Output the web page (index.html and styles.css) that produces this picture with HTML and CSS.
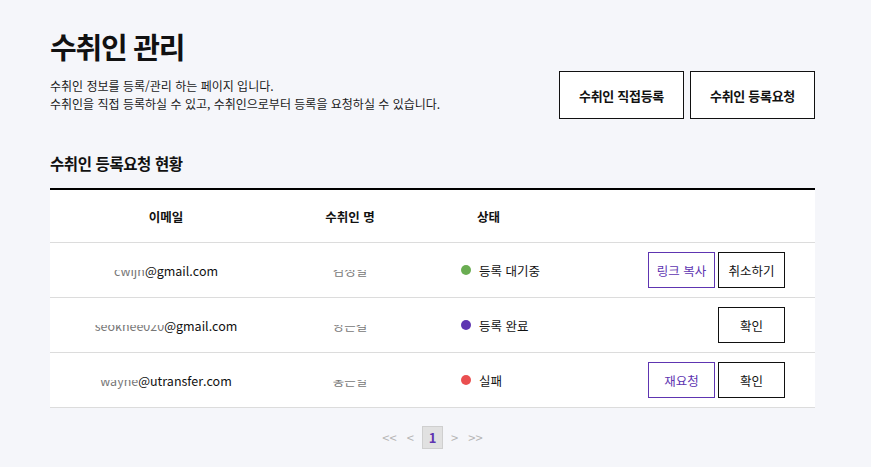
FILE: index.html
```html
<!DOCTYPE html>
<html lang="ko">
  <head>
    <meta charset="UTF-8" />
    <meta name="viewport" content="width=device-width, initial-scale=1.0" />
    <title>수취인 관리</title>
    <link rel="stylesheet" href="styles.css">
  </head>
  <body>
    <div class="page">
      <div class="top">
        <div class="intro">
          <h1>수취인 관리</h1>
          <p>수취인 정보를 등록/관리 하는 페이지 입니다.<br />수취인을 직접 등록하실 수 있고, 수취인으로부터 등록을 요청하실 수 있습니다.</p>
        </div>
        <div class="top-actions">
          <button class="btn-big">수취인 직접등록</button>
          <button class="btn-big">수취인 등록요청</button>
        </div>
      </div>

      <h2>수취인 등록요청 현황</h2>

      <div class="table">
        <div class="row head">
          <div class="c-email">이메일</div>
          <div class="c-name">수취인 명</div>
          <div class="c-status">상태</div>
          <div class="c-act"></div>
        </div>
        <div class="row">
          <div class="c-email"><span class="masked">cwijh</span>@gmail.com</div>
          <div class="c-name"><span class="masked">김성일</span></div>
          <div class="c-status"><i class="dot wait"></i>등록 대기중</div>
          <div class="c-act">
            <button class="btn-sm purple">링크 복사</button>
            <button class="btn-sm">취소하기</button>
          </div>
        </div>
        <div class="row">
          <div class="c-email"><span class="masked">seokhee020</span>@gmail.com</div>
          <div class="c-name"><span class="masked">양은길</span></div>
          <div class="c-status"><i class="dot done"></i>등록 완료</div>
          <div class="c-act">
            <button class="btn-sm">확인</button>
          </div>
        </div>
        <div class="row">
          <div class="c-email"><span class="masked">wayne</span>@utransfer.com</div>
          <div class="c-name"><span class="masked">홍은일</span></div>
          <div class="c-status"><i class="dot fail"></i>실패</div>
          <div class="c-act">
            <button class="btn-sm purple">재요청</button>
            <button class="btn-sm">확인</button>
          </div>
        </div>
      </div>

      <div class="pager">
        <span>&lt;&lt;</span>
        <span>&lt;</span>
        <span class="current">1</span>
        <span>&gt;</span>
        <span>&gt;&gt;</span>
      </div>
    </div>
  </body>
</html>
```

FILE: styles.css
```css
body {
  margin: 0;
  background: #f5f6fa;
  color: #111;
  font-family: "Noto Sans CJK KR", "Noto Sans", sans-serif;
}
.page {
  width: 765px;
  margin-left: 50px;
  padding-top: 26px;
}
.top {
  display: flex;
  justify-content: space-between;
  align-items: flex-start;
}
h1 {
  margin: 0;
  font-size: 29px;
  font-weight: 700;
  letter-spacing: -1.2px;
  line-height: 40px;
}
.intro p {
  margin: 11px 0 0;
  font-size: 12px;
  line-height: 17.5px;
  color: #1a1a1a;
}
.top-actions {
  display: flex;
  gap: 6px;
  margin-top: 45px;
}
button {
  font-family: inherit;
  cursor: pointer;
  background: #fff;
  color: #111;
}
.btn-big {
  width: 125px;
  height: 48px;
  border: 1px solid #111;
  font-size: 13px;
  font-weight: 700;
  letter-spacing: -0.3px;
}
h2 {
  margin: 32px 0 13px;
  font-size: 15.5px;
  font-weight: 700;
  letter-spacing: -0.4px;
  line-height: 24px;
}
.table {
  background: #fff;
  border-top: 2px solid #000;
}
.row {
  display: grid;
  grid-template-columns: 232px 136px 1fr auto;
  align-items: center;
  height: 54px;
  border-bottom: 1px solid #dcdcdc;
  font-size: 12.5px;
}
.row.head {
  height: 52px;
  font-weight: 700;
}
.c-email, .c-name {
  text-align: center;
}
.c-status {
  display: flex;
  align-items: center;
  padding-left: 43px;
}
.head .c-status {
  padding-left: 59px;
}
.c-act {
  display: flex;
  gap: 3px;
  padding-right: 30px;
  justify-content: flex-end;
}
.masked {
  color: #777;
  clip-path: inset(50% 0 0 0);
}
.dot {
  width: 10px;
  height: 10px;
  border-radius: 50%;
  margin-right: 8px;
}
.dot.wait { background: #6aad52; }
.dot.done { background: #5e35b1; }
.dot.fail { background: #ea4f50; }
.btn-sm {
  width: 67px;
  height: 36px;
  border: 1px solid #111;
  font-size: 12.5px;
}
.btn-sm.purple {
  border-color: #5e35b1;
  color: #5e35b1;
}
.pager {
  display: flex;
  justify-content: center;
  align-items: center;
  margin-top: 18px;
  font-size: 13px;
  color: #b5b5b5;
}
.pager span {
  padding: 0 5px;
}
.pager .current {
  width: 19px;
  height: 21px;
  padding: 0;
  margin: 0 3px;
  display: flex;
  align-items: center;
  justify-content: center;
  background: #e1e1e1;
  border: 1px solid #cfcfcf;
  color: #5e35b1;
  font-weight: 700;
}
```
